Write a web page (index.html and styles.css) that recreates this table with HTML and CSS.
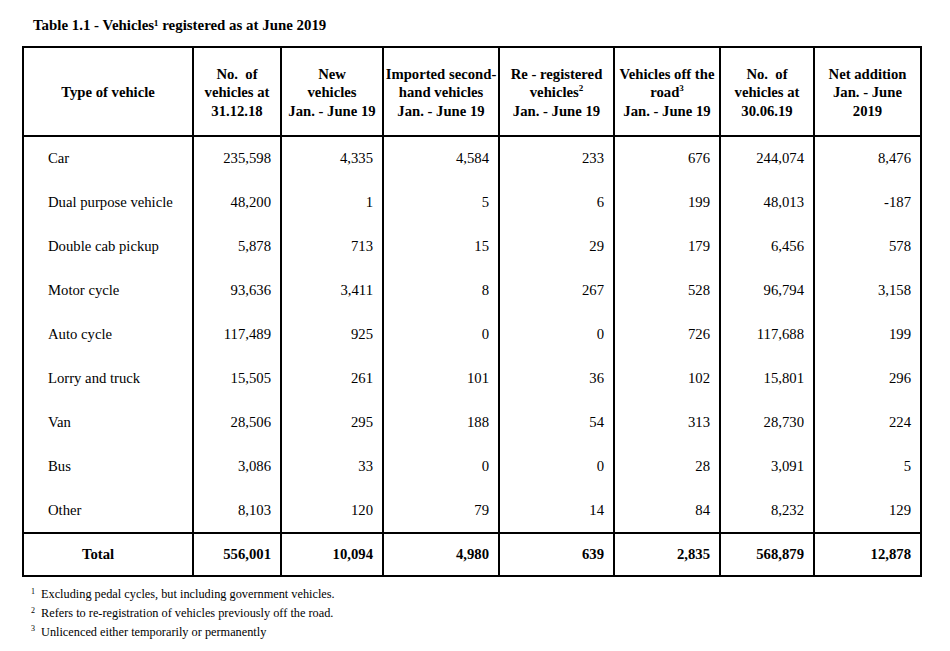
FILE: index.html
```html
<!DOCTYPE html>
<html>
<head>
<meta charset="utf-8">
<link rel="stylesheet" href="styles.css">
</head>
<body>
<div class="page">
  <h1 class="title">Table 1.1 - Vehicles¹ registered as at June 2019</h1>
  <table class="vt">
    <colgroup>
      <col class="c1"><col class="c2"><col class="c3"><col class="c4"><col class="c5"><col class="c6"><col class="c7"><col class="c8">
    </colgroup>
    <thead>
      <tr class="head">
        <th>Type of vehicle</th>
        <th>No.&nbsp; of<br>vehicles at<br>31.12.18</th>
        <th>New<br>vehicles<br>Jan. - June 19</th>
        <th>Imported second-<br>hand vehicles<br>Jan. - June 19</th>
        <th>Re - registered<br>vehicles<sup>2</sup><br>Jan. - June 19</th>
        <th>Vehicles off the<br>road<sup>3</sup><br>Jan. - June 19</th>
        <th>No.&nbsp; of<br>vehicles at<br>30.06.19</th>
        <th>Net addition<br>Jan. - June<br>2019</th>
      </tr>
    </thead>
    <tbody>
      <tr><td>Car</td><td>235,598</td><td>4,335</td><td>4,584</td><td>233</td><td>676</td><td>244,074</td><td>8,476</td></tr>
      <tr><td>Dual purpose vehicle</td><td>48,200</td><td>1</td><td>5</td><td>6</td><td>199</td><td>48,013</td><td>-187</td></tr>
      <tr><td>Double cab pickup</td><td>5,878</td><td>713</td><td>15</td><td>29</td><td>179</td><td>6,456</td><td>578</td></tr>
      <tr><td>Motor cycle</td><td>93,636</td><td>3,411</td><td>8</td><td>267</td><td>528</td><td>96,794</td><td>3,158</td></tr>
      <tr><td>Auto cycle</td><td>117,489</td><td>925</td><td>0</td><td>0</td><td>726</td><td>117,688</td><td>199</td></tr>
      <tr><td>Lorry and truck</td><td>15,505</td><td>261</td><td>101</td><td>36</td><td>102</td><td>15,801</td><td>296</td></tr>
      <tr><td>Van</td><td>28,506</td><td>295</td><td>188</td><td>54</td><td>313</td><td>28,730</td><td>224</td></tr>
      <tr><td>Bus</td><td>3,086</td><td>33</td><td>0</td><td>0</td><td>28</td><td>3,091</td><td>5</td></tr>
      <tr><td>Other</td><td>8,103</td><td>120</td><td>79</td><td>14</td><td>84</td><td>8,232</td><td>129</td></tr>
    </tbody>
    <tfoot>
      <tr class="total"><td>Total</td><td>556,001</td><td>10,094</td><td>4,980</td><td>639</td><td>2,835</td><td>568,879</td><td>12,878</td></tr>
    </tfoot>
  </table>
  <div class="notes">
    <div class="note"><span class="mark">1</span><span>Excluding pedal cycles, but including government vehicles.</span></div>
    <div class="note"><span class="mark">2</span><span>Refers to re-registration of vehicles previously off the road.</span></div>
    <div class="note"><span class="mark m3">3</span><span>Unlicenced either temporarily or permanently</span></div>
  </div>
</div>
</body>
</html>
```
FILE: styles.css
```css
html, body {
  margin: 0;
  padding: 0;
  background: #fff;
}
body {
  font-family: "Liberation Serif", "Times New Roman", serif;
  color: #000;
}
.page {
  padding: 17px 0 0 22px;
}
.title {
  margin: 0 0 12px 11px;
  font-size: 14.9px;
  line-height: 17px;
  font-weight: bold;
}
.vt {
  border-collapse: collapse;
  table-layout: fixed;
  width: 898px;
  font-size: 14.7px;
}
.c1 { width: 170px; }
.c2 { width: 88px; }
.c3 { width: 102px; }
.c4 { width: 116px; }
.c5 { width: 115px; }
.c6 { width: 106px; }
.c7 { width: 94px; }
.c8 { width: 107px; }
.vt th,
.vt td {
  border-left: 2px solid #000;
  border-right: 2px solid #000;
  padding: 0 9px 0 0;
  text-align: right;
  white-space: nowrap;
}
.head th {
  border-top: 2px solid #000;
  border-bottom: 2px solid #000;
  height: 85px;
  line-height: 18.5px;
  text-align: center;
  padding: 2px 0 0 0;
  font-weight: bold;
  vertical-align: middle;
}
.head sup {
  font-size: 9px;
  line-height: 0;
  vertical-align: 6px;
}
.vt tbody td {
  height: 43.9px;
  line-height: 17px;
  vertical-align: middle;
}
.vt tbody td:first-child {
  text-align: left;
  padding-left: 24px;
}
.total td {
  border-top: 2px solid #000;
  border-bottom: 2px solid #000;
  height: 41px;
  font-weight: bold;
}
.total td:first-child {
  text-align: left;
  padding-left: 58px;
}
.notes {
  padding-top: 8px;
  font-size: 12.3px;
}
.note {
  display: flex;
  line-height: 19px;
}
.mark {
  width: 10px;
  margin-left: 9px;
  font-size: 8px;
  line-height: 14px;
}
.m3 { line-height: 12px; }
```
